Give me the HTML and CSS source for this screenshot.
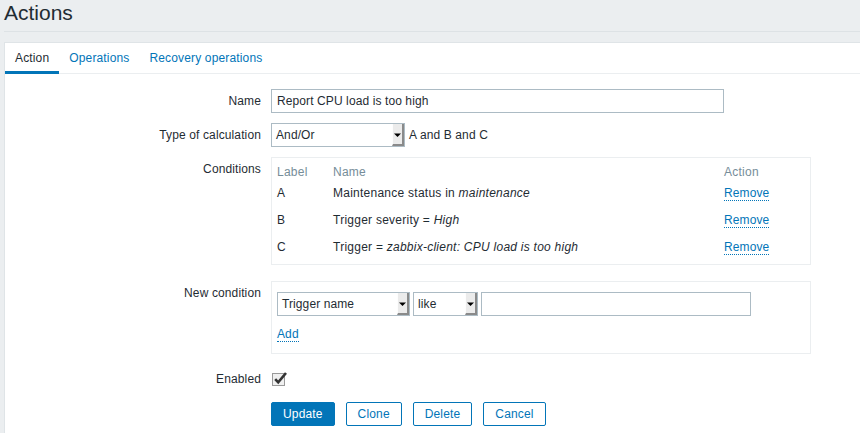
FILE: index.html
```html
<!DOCTYPE html>
<html>
<head>
<meta charset="utf-8">
<title>Actions</title>
<link rel="stylesheet" href="styles.css">
</head>
<body>
<div class="page">
  <header class="header"><h1 class="title">Actions</h1></header>
  <div class="panel">
    <nav class="tabs">
      <span class="tab active">Action</span>
      <a class="tab" href="#">Operations</a>
      <a class="tab" href="#">Recovery operations</a>
    </nav>
    <form class="form">
      <div class="row">
        <label class="label">Name</label>
        <div class="field"><span class="input input-name">Report CPU load is too high</span></div>
      </div>
      <div class="row">
        <label class="label">Type of calculation</label>
        <div class="field inline">
          <span class="select sel-calc"><span class="sel-text">And/Or</span><span class="sel-btn"><svg width="7" height="7" viewBox="0 0 7 7"><path d="M0 2.5h7L3.5 6z" fill="#000"/></svg></span></span>
          <span class="calc-text">A and B and C</span>
        </div>
      </div>
      <div class="row">
        <label class="label">Conditions</label>
        <div class="field">
          <div class="box cond-box">
            <div class="cond-grid head"><span>Label</span><span>Name</span><span>Action</span></div>
            <div class="cond-grid"><span>A</span><span>Maintenance status in <i>maintenance</i></span><span><a class="link" href="#">Remove</a></span></div>
            <div class="cond-grid"><span>B</span><span>Trigger severity = <i>High</i></span><span><a class="link" href="#">Remove</a></span></div>
            <div class="cond-grid"><span>C</span><span>Trigger = <i>zabbix-client: CPU load is too high</i></span><span><a class="link" href="#">Remove</a></span></div>
          </div>
        </div>
      </div>
      <div class="row row-new">
        <label class="label">New condition</label>
        <div class="field">
          <div class="box new-box">
            <div class="new-line">
              <span class="select sel-type"><span class="sel-text">Trigger name</span><span class="sel-btn"><svg width="7" height="7" viewBox="0 0 7 7"><path d="M0 2.5h7L3.5 6z" fill="#000"/></svg></span></span>
              <span class="select sel-op"><span class="sel-text">like</span><span class="sel-btn"><svg width="7" height="7" viewBox="0 0 7 7"><path d="M0 2.5h7L3.5 6z" fill="#000"/></svg></span></span>
              <span class="input input-value"></span>
            </div>
            <div class="add-line"><a class="link" href="#">Add</a></div>
          </div>
        </div>
      </div>
      <div class="row row-enabled">
        <label class="label">Enabled</label>
        <div class="field check-field">
          <svg class="check" width="17" height="17" viewBox="0 0 17 17">
            <rect x="1.5" y="3.5" width="12" height="12" fill="#f0f0f0" stroke="#9a9a9a"/>
            <path d="M4.2 9.2l3 3.2L15 3" fill="none" stroke="#333" stroke-width="2.6"/>
          </svg>
        </div>
      </div>
      <div class="row row-buttons">
        <span class="label"></span>
        <div class="field buttons">
          <button type="button" class="btn primary">Update</button>
          <button type="button" class="btn">Clone</button>
          <button type="button" class="btn">Delete</button>
          <button type="button" class="btn">Cancel</button>
        </div>
      </div>
    </form>
  </div>
</div>
</body>
</html>
```

FILE: styles.css
```css
* { box-sizing: border-box; }
html, body { margin: 0; padding: 0; }
body {
  background: #ebeef0;
  font-family: "Liberation Sans", Arial, sans-serif;
  font-size: 12px;
  line-height: 14px;
  letter-spacing: 0.12px;
  color: #1f2c33;
  overflow: hidden;
}
.page { padding-left: 4px; }
.header {
  height: 32px;
  padding-top: 1px;
  border-bottom: 1px solid #dde2e5;
}
.title {
  margin: 0;
  font-size: 21px;
  line-height: 24px;
  font-weight: normal;
  letter-spacing: 0;
  color: #1f2c33;
}
.panel {
  margin-top: 10px;
  background: #fff;
  border: 1px solid #dfe4e7;
  border-right: none;
  height: 400px;
}
.tabs {
  display: flex;
  border-bottom: 1px solid #ebeef0;
}
.tab {
  display: block;
  padding: 8px 10px 6px;
  border-bottom: 3px solid transparent;
  margin-bottom: -1px;
  color: #0275b8;
  text-decoration: none;
  letter-spacing: 0.15px;
}
.tab.active { color: #1f2c33; border-bottom-color: #0275b8; }
.form { padding-top: 15px; }
.row { display: flex; margin-bottom: 10px; }
.label {
  width: 256px;
  flex: none;
  text-align: right;
  padding-top: 5px;
  margin-right: 10px;
}
.field { flex: none; }
.inline { display: flex; align-items: center; gap: 4px; }
.input {
  display: flex;
  align-items: center;
  height: 24px;
  border: 1px solid #acbbc4;
  padding: 0 5px;
  background: #fff;
  letter-spacing: 0.1px;
}
.input-name { width: 453px; }
.select {
  display: flex;
  height: 24px;
  border: 1px solid #acbbc4;
  background: #fff;
  letter-spacing: 0.1px;
}
.sel-text { flex: 1; padding-left: 4px; display: flex; align-items: center; }
.sel-btn {
  width: 12px;
  background: #ebebeb;
  border-right: 2px solid #8a8a8a;
  border-bottom: 2px solid #8a8a8a;
  border-left: 1px solid #fdfdfd;
  display: flex;
  align-items: center;
  justify-content: center;
}
.sel-calc { width: 134px; }
.box { border: 1px solid #ebeef0; width: 540px; }
.cond-box { padding: 6px 5px 4px; }
.cond-grid {
  display: grid;
  grid-template-columns: 56px 1fr 81px;
  height: 27px;
  align-items: center;
  letter-spacing: 0.25px;
}
.cond-grid.head { height: 15px; color: #768d99; }
.link {
  color: #0275b8;
  text-decoration: none;
  border-bottom: 1px dotted #0275b8;
  letter-spacing: 0.12px;
}
.row-new { margin-top: 16px; }
.new-box { padding: 10px 5px 12px; height: 73px; }
.new-line { display: flex; gap: 3px; }
.sel-type { width: 133px; }
.sel-op { width: 65px; }
.input-value { width: 270px; }
.add-line { margin-top: 11px; }
.row-enabled { margin-top: 13px; margin-bottom: 11px; height: 24px; }
.check-field { padding-top: 3px; padding-left: 0; }
.check { display: block; }
.buttons { display: flex; gap: 11px; }
.btn {
  height: 24px;
  padding: 0 11px;
  border: 1px solid #0275b8;
  background: #fff;
  color: #0275b8;
  font-family: "Liberation Sans", Arial, sans-serif;
  font-size: 12px;
  letter-spacing: 0.15px;
  border-radius: 2px;
}
.btn.primary { background: #0275b8; color: #fff; }
```
